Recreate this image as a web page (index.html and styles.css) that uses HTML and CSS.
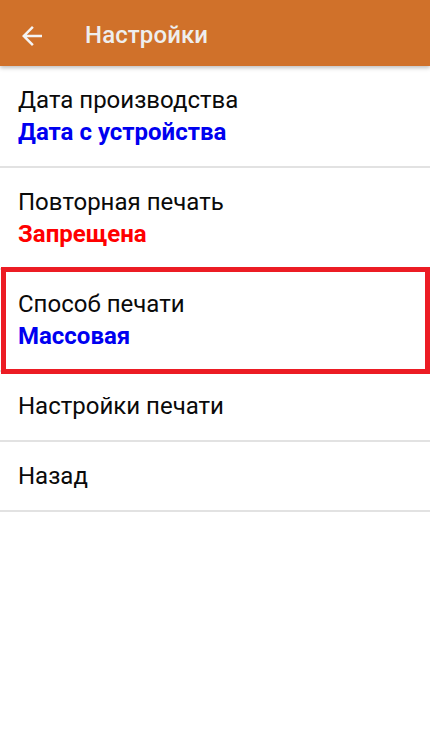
FILE: index.html
```html
<!DOCTYPE html>
<html lang="ru">
<head>
<meta charset="utf-8">
<title>Настройки</title>
<link rel="stylesheet" href="styles.css">
</head>
<body>
<header class="appbar">
  <svg class="back" viewBox="0 0 24 24" width="30" height="30" aria-hidden="true">
    <path d="M20 11H7.83l5.59-5.59L12 4l-8 8 8 8 1.41-1.41L7.83 13H20v-2z" fill="currentColor"/>
  </svg>
  <h1 class="appbar-title">Настройки</h1>
</header>
<ul class="menu">
  <li class="item">
    <div class="item-title">Дата производства</div>
    <div class="item-value value-blue">Дата с устройства</div>
  </li>
  <li class="item">
    <div class="item-title">Повторная печать</div>
    <div class="item-value value-red">Запрещена</div>
  </li>
  <li class="item highlighted">
    <div class="item-title">Способ печати</div>
    <div class="item-value value-blue">Массовая</div>
    <span class="mark"></span>
  </li>
  <li class="item single">
    <div class="item-title">Настройки печати</div>
  </li>
  <li class="item single">
    <div class="item-title">Назад</div>
  </li>
</ul>
</body>
</html>
```

FILE: styles.css
```css
html, body {
  margin: 0;
  padding: 0;
  background: #ffffff;
}
body {
  font-family: Roboto, "Noto Sans", "Liberation Sans", sans-serif;
  width: 430px;
  height: 739px;
  overflow: hidden;
}
.appbar {
  position: relative;
  z-index: 2;
  height: 66px;
  background: #d0712a;
  display: flex;
  align-items: center;
  box-shadow: 0 2px 4px rgba(0, 0, 0, 0.25);
}
.back {
  color: #f4f4f4;
  margin-left: 17px;
  margin-top: 5px;
  flex: none;
}
.appbar-title {
  margin: 4px 0 0 38px;
  font-size: 24px;
  font-weight: 500;
  color: #eeeeee;
  letter-spacing: 0.1px;
}
.menu {
  list-style: none;
  margin: 0;
  padding: 0;
}
.item {
  position: relative;
  padding: 20px 18px 20px;
  border-bottom: 2px solid #e2e2e2;
}
.item-title {
  font-size: 24px;
  line-height: 28px;
  color: #0a0a0a;
}
.item-value {
  font-size: 24px;
  line-height: 28px;
  font-weight: 700;
  margin-top: 4px;
}
.value-blue { color: #0000f0; }
.value-red { color: #ff0000; }
.mark {
  position: absolute;
  left: 1px;
  right: 0;
  top: -3px;
  bottom: -4px;
  border: 5px solid #ec1c24;
  pointer-events: none;
}
```
